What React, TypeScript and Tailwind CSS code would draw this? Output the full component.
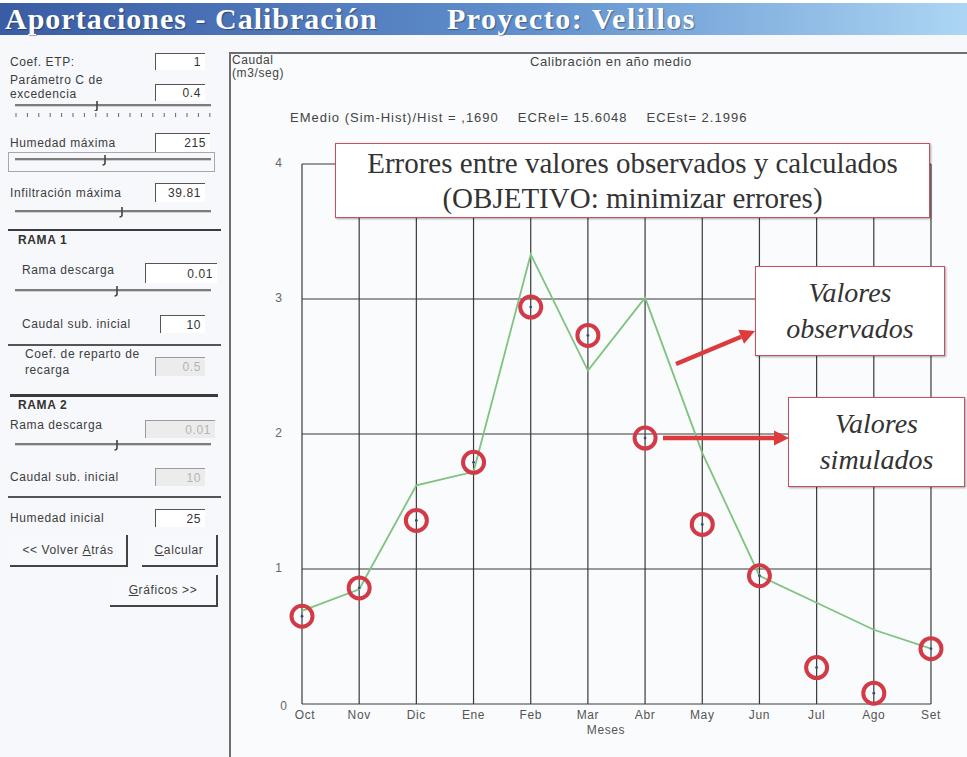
import { clsx } from 'clsx';

const MONTHS = ['Oct', 'Nov', 'Dic', 'Ene', 'Feb', 'Mar', 'Abr', 'May', 'Jun', 'Jul', 'Ago', 'Set'];
const X0 = 302;
const DX = 57.18;
const xOf = (i: number) => X0 + i * DX;
const yOf = (v: number) => 704 - v * 135;

// observed (circles) and simulated (green line), m3/seg
const OBS = [0.65, 0.86, 1.36, 1.79, 2.94, 2.73, 1.97, 1.33, 0.95, 0.27, 0.08, 0.41];
const SIM = [0.69, 0.85, 1.62, 1.72, 3.33, 2.47, 3.01, 1.86, 0.95, 0.75, 0.55, 0.41];

const Box = ({ value, className, disabled }: { value: string; className: string; disabled?: boolean }) => (
  <div
    className={clsx(
      'flex items-center justify-end pr-[4px] border-t border-l',
      disabled ? 'bg-[#ececec] text-[#b4b4b4] border-[#9a9a9a]' : 'bg-white text-[#333] border-[#555]',
      className
    )}
  >
    {value}
  </div>
);

const Slider = ({ h, y, thumb }: { h: number; y: number; thumb: number }) => (
  <svg width={229} height={h} className="block">
    <line x1={15} y1={y} x2={211} y2={y} stroke="#555" strokeWidth={1.5} />
    <line x1={15} y1={y + 1.5} x2={211} y2={y + 1.5} stroke="#d0d0d0" strokeWidth={1} />
    <path d={`M${thumb} ${y - 4} L${thumb} ${y + 4} Q${thumb} ${y + 6} ${thumb - 2.5} ${y + 6}`} stroke="#444" strokeWidth={1.6} fill="none" />
  </svg>
);

const Ticks = () => (
  <svg width={229} height={8} className="block">
    {Array.from({ length: 18 }).map((_, i) => (
      <line key={i} x1={16 + i * 11.4} y1={2} x2={16 + i * 11.4} y2={6} stroke="#666" strokeWidth={1} />
    ))}
  </svg>
);

const Button = ({ className, children }: { className: string; children: React.ReactNode }) => (
  <div className={clsx('flex items-center justify-center border-r-2 border-b-2 border-[#444] bg-[#f7f9fc]', className)}>
    {children}
  </div>
);

const Panel = () => (
  <aside className="w-[229px] flex flex-col text-[12px] tracking-[0.6px] text-[#3d3d3d]">
    <div className="mt-[18px] h-[17px] flex items-center">
      <span className="pl-[10px] w-[155px]">Coef. ETP:</span>
      <Box value="1" className="w-[50px] h-[17px]" />
    </div>
    <div className="mt-[2px] h-[29px] flex items-end">
      <span className="pl-[10px] w-[155px] leading-[14px]">
        Parámetro C de
        <br />
        excedencia
      </span>
      <Box value="0.4" className="w-[50px] h-[17px]" />
    </div>
    <Slider h={10} y={4} thumb={97} />
    <Ticks />
    <div className="mt-[14px] h-[19px] flex items-center">
      <span className="pl-[10px] w-[155px]">Humedad máxima</span>
      <Box value="215" className="w-[55px] h-[19px]" />
    </div>
    <div className="ml-[8px] w-[207px] h-[20px] border border-[#a8a8a8] overflow-hidden">
      <div className="-ml-[9px] -mt-[1px]">
        <Slider h={20} y={7} thumb={105} />
      </div>
    </div>
    <div className="mt-[11px] h-[19px] flex items-center">
      <span className="pl-[10px] w-[155px]">Infiltración máxima</span>
      <Box value="39.81" className="w-[50px] h-[19px]" />
    </div>
    <Slider h={16} y={9} thumb={122} />

    <div className="mt-[11px] mx-[8px] h-[2px] bg-[#3a3a3a]" />
    <div className="mt-[2px] h-[14px] pl-[18px] flex items-center font-bold text-[#333]">RAMA 1</div>
    <div className="mt-[16px] h-[20px] flex items-start">
      <span className="pl-[22px] w-[145px] leading-[14px]">Rama descarga</span>
      <Box value="0.01" className="w-[72px] h-[20px]" />
    </div>
    <Slider h={14} y={7} thumb={117} />
    <div className="mt-[18px] h-[18px] flex items-center">
      <span className="pl-[22px] w-[160px]">Caudal sub. inicial</span>
      <Box value="10" className="w-[45px] h-[18px]" />
    </div>
    <div className="mt-[11px] mx-[8px] h-[2px] bg-[#555]" />
    <div className="h-[30px] flex items-end">
      <span className="self-start pl-[25px] w-[155px] leading-[16px]">
        Coef. de reparto de
        <br />
        recarga
      </span>
      <Box value="0.5" disabled className="w-[50px] h-[19px]" />
    </div>

    <div className="mt-[18px] ml-[10px] mr-[11px] h-[3px] bg-[#3a3a3a]" />
    <div className="mt-[1px] h-[14px] pl-[18px] flex items-center font-bold text-[#333]">RAMA 2</div>
    <div className="mt-[6px] h-[20px] flex items-start">
      <span className="pl-[10px] w-[145px] leading-[14px]">Rama descarga</span>
      <div className="self-end">
        <Box value="0.01" disabled className="w-[70px] h-[18px]" />
      </div>
    </div>
    <Slider h={14} y={6} thumb={117} />
    <div className="mt-[16px] h-[18px] flex items-center">
      <span className="pl-[10px] w-[155px]">Caudal sub. inicial</span>
      <Box value="10" disabled className="w-[50px] h-[18px]" />
    </div>
    <div className="mt-[10px] mx-[8px] h-[2px] bg-[#555]" />
    <div className="mt-[11px] h-[18px] flex items-center">
      <span className="pl-[10px] w-[155px]">Humedad inicial</span>
      <Box value="25" className="w-[50px] h-[18px]" />
    </div>

    <div className="mt-[8px] h-[32px] flex">
      <Button className="ml-[10px] w-[118px]">
        &lt;&lt; Volver <span className="ml-[4px] underline">A</span>trás
      </Button>
      <Button className="ml-[14px] w-[76px]">
        <span className="underline">C</span>alcular
      </Button>
    </div>
    <div className="mt-[8px] h-[32px] flex">
      <Button className="ml-[110px] w-[108px]">
        <span className="underline">G</span>ráficos &gt;&gt;
      </Button>
    </div>
  </aside>
);

const Arrow = ({ from, to }: { from: [number, number]; to: [number, number] }) => {
  const dx = to[0] - from[0];
  const dy = to[1] - from[1];
  const len = Math.hypot(dx, dy);
  const ux = dx / len;
  const uy = dy / len;
  const bx = to[0] - ux * 15;
  const by = to[1] - uy * 15;
  const nx = -uy * 7.5;
  const ny = ux * 7.5;
  return (
    <g>
      <line x1={from[0]} y1={from[1]} x2={bx} y2={by} stroke="#dc3a3c" strokeWidth={4.5} />
      <polygon points={`${to[0]},${to[1]} ${bx + nx},${by + ny} ${bx - nx},${by - ny}`} fill="#dc3a3c" />
    </g>
  );
};

const Chart = () => (
  <svg width={736} height={627} viewBox="231 130 736 627" className="block">
    {[0, 1, 2, 3, 4].map(v => (
      <g key={v}>
        <line x1={X0} y1={yOf(v)} x2={xOf(11)} y2={yOf(v)} stroke="#3a3a3a" strokeWidth={1.2} />
        <text
          x={v === 0 ? 284 : 279}
          y={v === 0 ? 707 : yOf(v)}
          textAnchor="middle"
          dominantBaseline="middle"
          fontSize={12}
          fill="#666"
        >
          {v}
        </text>
      </g>
    ))}
    {MONTHS.map((m, i) => (
      <g key={m}>
        <line x1={xOf(i)} y1={yOf(4)} x2={xOf(i)} y2={yOf(0)} stroke="#3a3a3a" strokeWidth={1.2} />
        <text x={xOf(i) + (i === 0 ? 3 : 0)} y={716} textAnchor="middle" dominantBaseline="middle" fontSize={12} fill="#555">
          {m}
        </text>
      </g>
    ))}
    <text x={606} y={731} textAnchor="middle" dominantBaseline="middle" fontSize={12} fill="#555">
      Meses
    </text>

    <polyline
      points={SIM.map((v, i) => `${xOf(i)},${yOf(v)}`).join(' ')}
      fill="none"
      stroke="#7fc37f"
      strokeWidth={1.8}
    />
    {OBS.map((v, i) => (
      <g key={i}>
        <circle cx={xOf(i)} cy={yOf(v)} r={10.5} fill="none" stroke="#d23a48" strokeWidth={4} />
        <circle cx={xOf(i)} cy={yOf(v)} r={1.4} fill="#3b4a78" />
      </g>
    ))}

    <Arrow from={[676, 364]} to={[755, 331]} />
    <Arrow from={[663, 438]} to={[789, 438]} />
  </svg>
);

const Note = ({ className, children }: { className: string; children: React.ReactNode }) => (
  <div
    className={clsx(
      'absolute flex flex-col items-center justify-center bg-white border-[1.5px] border-[#c8505c] shadow-[1px_1px_2px_rgba(0,0,0,0.35)] text-[#333] font-["Liberation_Serif"] tracking-normal',
      className
    )}
  >
    {children}
  </div>
);

const App = () => {
  return (
    <div className="w-[967px] h-[757px] overflow-hidden bg-[#f6f8fb] font-['Liberation_Sans',sans-serif]">
      <div className="h-[3px] bg-white" />
      <div className="h-[32px] flex items-center pl-[5px] bg-linear-to-r from-[#3a5ca4] via-[#6190cd] via-55% to-[#acd6f3] font-['Liberation_Serif',serif] font-bold text-white text-[30px] leading-none [text-shadow:1px_1px_1px_rgba(0,0,0,0.35)]">
        <span className="w-[442px] tracking-[1px]">Aportaciones - Calibración</span>
        <span className="tracking-[1.5px]">Proyecto: Velillos</span>
      </div>

      <div className="flex h-[722px]">
        <Panel />

        <section className="flex-1 mt-[17px] flex flex-col border-l-2 border-t-2 border-[#6e6e6e] bg-[#f9fbfd] text-[12px] tracking-[0.6px] text-[#444]">
          <div className="h-[76px] pl-[1px]">
            <div className="flex">
              <div className="w-[298px] leading-[13px]">
                Caudal
                <br />
                (m3/seg)
              </div>
              <div className="leading-[13px] pt-[1px] text-[13px]">Calibración en año medio</div>
            </div>
            <div className="mt-[31px] ml-[58px] flex gap-[19px] leading-[14px] text-[13px] tracking-[1px]">
              <span>EMedio (Sim-Hist)/Hist = ,1690</span>
              <span>ECRel= 15.6048</span>
              <span>ECEst= 2.1996</span>
            </div>
          </div>

          <div className="relative flex-1">
            <Chart />
            <Note className="left-[104px] top-[13px] w-[595px] h-[75px] text-[29px] leading-[35px]">
              <span>Errores entre valores observados y calculados</span>
              <span>(OBJETIVO: minimizar errores)</span>
            </Note>
            <Note className="left-[524px] top-[136px] w-[190px] h-[90px] italic text-[28px] leading-[36px] tracking-[2px]">
              <span>Valores</span>
              <span>observados</span>
            </Note>
            <Note className="left-[557px] top-[267px] w-[177px] h-[90px] italic text-[28px] leading-[36px] tracking-[2px]">
              <span>Valores</span>
              <span>simulados</span>
            </Note>
          </div>
        </section>
      </div>
    </div>
  );
};

export default App;
